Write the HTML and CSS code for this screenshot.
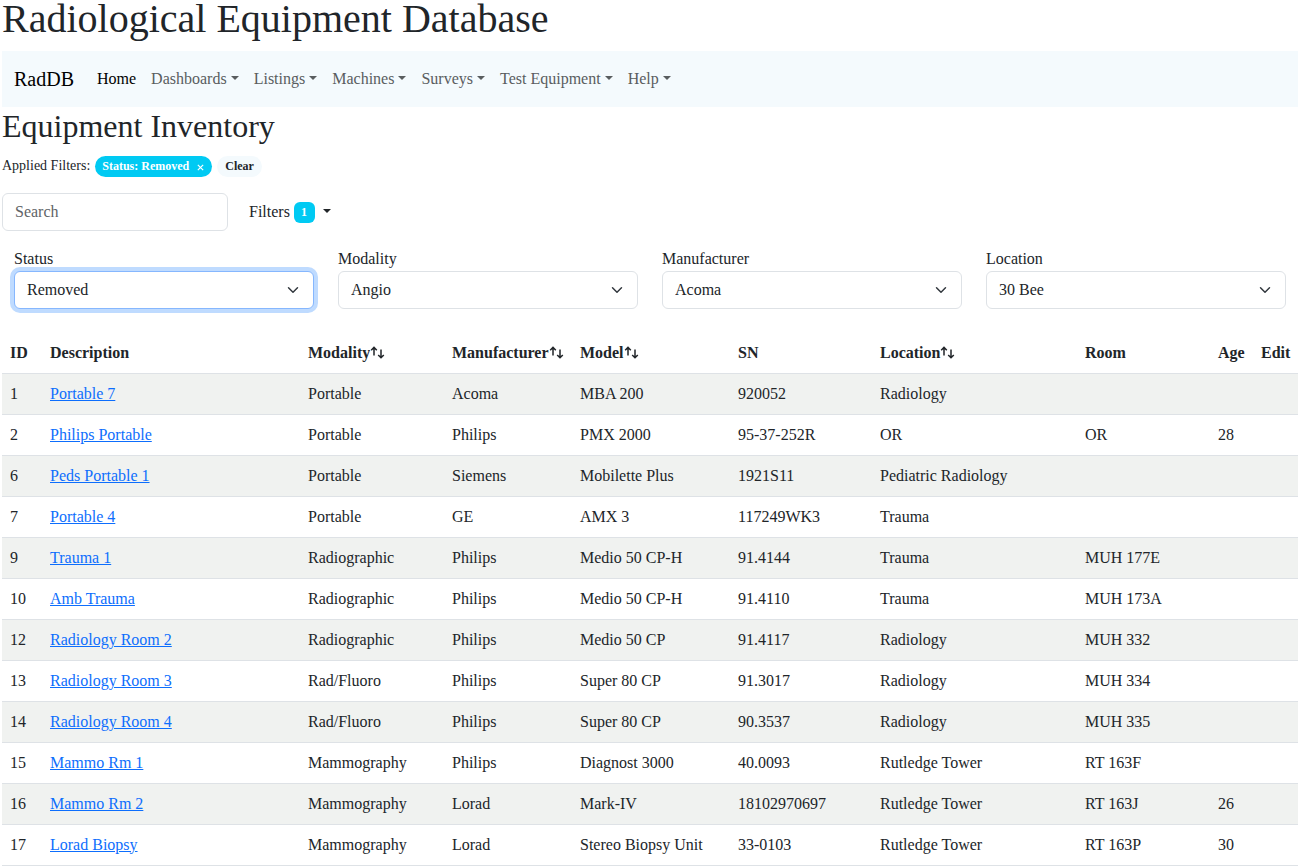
FILE: index.html
```
<!DOCTYPE html>
<html lang="en">
<head>
<meta charset="utf-8">
<title>Radiological Equipment Database</title>
<link rel="stylesheet" href="styles.css">
</head>
<body>
<svg class="sprite" aria-hidden="true">
  <symbol id="sort" viewBox="0 0 15 14"><path d="M4 9.5V1.6M1.2 4.2 4 1.4l2.8 2.8M11 3.5v8.2M8.2 9 11 11.8 13.8 9"/></symbol>
</svg>
<h1 class="site-title">Radiological Equipment Database</h1>
<nav class="navbar">
  <a class="brand" href="#">RadDB</a>
  <a class="nav-link active" href="#">Home</a>
  <a class="nav-link caret" href="#">Dashboards</a>
  <a class="nav-link caret" href="#">Listings</a>
  <a class="nav-link caret" href="#">Machines</a>
  <a class="nav-link caret" href="#">Surveys</a>
  <a class="nav-link caret" href="#">Test Equipment</a>
  <a class="nav-link caret" href="#">Help</a>
</nav>
<main>
  <h2 class="page-title">Equipment Inventory</h2>
  <div class="applied">
    <span class="applied-label">Applied Filters:</span>
    <span class="pill pill-info">Status: Removed <button class="pill-close" type="button" aria-label="Remove status filter"><svg viewBox="0 0 6 6"><path d="M.7.7l4.6 4.6M5.3.7.7 5.3"/></svg></button></span>
    <button class="pill pill-light" type="button">Clear</button>
  </div>
  <div class="toolbar">
    <input class="search" type="text" placeholder="Search" aria-label="Search">
    <button class="filters-toggle caret" type="button">Filters <span class="count">1</span></button>
  </div>
  <div class="filters">
    <div class="field"><label for="status">Status</label><select id="status" class="select focused"><option>Removed</option></select></div>
    <div class="field"><label for="modality">Modality</label><select id="modality" class="select"><option>Angio</option></select></div>
    <div class="field"><label for="manufacturer">Manufacturer</label><select id="manufacturer" class="select"><option>Acoma</option></select></div>
    <div class="field"><label for="location">Location</label><select id="location" class="select"><option>30 Bee</option></select></div>
  </div>
  <table class="inventory">
    <colgroup><col class="c-id"><col class="c-desc"><col class="c-modality"><col class="c-maker"><col class="c-model"><col class="c-sn"><col class="c-location"><col class="c-room"><col class="c-age"><col class="c-edit"></colgroup>
    <thead>
      <tr><th>ID</th><th>Description</th><th>Modality<svg class="sort"><use href="#sort"/></svg></th><th>Manufacturer<svg class="sort"><use href="#sort"/></svg></th><th>Model<svg class="sort"><use href="#sort"/></svg></th><th>SN</th><th>Location<svg class="sort"><use href="#sort"/></svg></th><th>Room</th><th>Age</th><th>Edit</th></tr>
    </thead>
    <tbody>
      <tr><td>1</td><td><a href="#">Portable 7</a></td><td>Portable</td><td>Acoma</td><td>MBA 200</td><td>920052</td><td>Radiology</td><td></td><td></td><td></td></tr>
      <tr><td>2</td><td><a href="#">Philips Portable</a></td><td>Portable</td><td>Philips</td><td>PMX 2000</td><td>95-37-252R</td><td>OR</td><td>OR</td><td>28</td><td></td></tr>
      <tr><td>6</td><td><a href="#">Peds Portable 1</a></td><td>Portable</td><td>Siemens</td><td>Mobilette Plus</td><td>1921S11</td><td>Pediatric Radiology</td><td></td><td></td><td></td></tr>
      <tr><td>7</td><td><a href="#">Portable 4</a></td><td>Portable</td><td>GE</td><td>AMX 3</td><td>117249WK3</td><td>Trauma</td><td></td><td></td><td></td></tr>
      <tr><td>9</td><td><a href="#">Trauma 1</a></td><td>Radiographic</td><td>Philips</td><td>Medio 50 CP-H</td><td>91.4144</td><td>Trauma</td><td>MUH 177E</td><td></td><td></td></tr>
      <tr><td>10</td><td><a href="#">Amb Trauma</a></td><td>Radiographic</td><td>Philips</td><td>Medio 50 CP-H</td><td>91.4110</td><td>Trauma</td><td>MUH 173A</td><td></td><td></td></tr>
      <tr><td>12</td><td><a href="#">Radiology Room 2</a></td><td>Radiographic</td><td>Philips</td><td>Medio 50 CP</td><td>91.4117</td><td>Radiology</td><td>MUH 332</td><td></td><td></td></tr>
      <tr><td>13</td><td><a href="#">Radiology Room 3</a></td><td>Rad/Fluoro</td><td>Philips</td><td>Super 80 CP</td><td>91.3017</td><td>Radiology</td><td>MUH 334</td><td></td><td></td></tr>
      <tr><td>14</td><td><a href="#">Radiology Room 4</a></td><td>Rad/Fluoro</td><td>Philips</td><td>Super 80 CP</td><td>90.3537</td><td>Radiology</td><td>MUH 335</td><td></td><td></td></tr>
      <tr><td>15</td><td><a href="#">Mammo Rm 1</a></td><td>Mammography</td><td>Philips</td><td>Diagnost 3000</td><td>40.0093</td><td>Rutledge Tower</td><td>RT 163F</td><td></td><td></td></tr>
      <tr><td>16</td><td><a href="#">Mammo Rm 2</a></td><td>Mammography</td><td>Lorad</td><td>Mark-IV</td><td>18102970697</td><td>Rutledge Tower</td><td>RT 163J</td><td>26</td><td></td></tr>
      <tr><td>17</td><td><a href="#">Lorad Biopsy</a></td><td>Mammography</td><td>Lorad</td><td>Stereo Biopsy Unit</td><td>33-0103</td><td>Rutledge Tower</td><td>RT 163P</td><td>30</td><td></td></tr>
    </tbody>
  </table>
</main>
</body>
</html>
```

FILE: styles.css
```
*, *::before, *::after { box-sizing: border-box; }
body {
  margin: 0;
  padding: 0 13px 0 2px;
  font: 16px/24px "Liberation Serif", "Times New Roman", serif;
  color: #212529;
  background: #fff;
}
button, input, select { font: inherit; color: inherit; }
.sprite { display: none; }

.site-title { margin: 0 0 13px; font-size: 40px; line-height: 38px; font-weight: 400; }
.navbar { display: flex; align-items: center; padding: 8px 12px; background: #f4fafd; }
.brand { margin-right: 15px; padding: 5px 0; font-size: 20px; line-height: 30px; color: #000; text-decoration: none; }
.nav-link { padding: 8px 7px 8px 8px; color: #595d5f; text-decoration: none; }
.nav-link.active { color: #000; }
.caret::after {
  content: "";
  display: inline-block;
  margin-left: 4px;
  vertical-align: 4px;
  border: 4px solid transparent;
  border-top-color: currentColor;
  border-bottom: 0;
}

.page-title { margin: 0 0 8px; font-size: 32px; line-height: 38px; font-weight: 400; }
.applied { display: flex; align-items: center; gap: 5px; height: 24px; margin-bottom: 16px; }
.applied-label { padding-top: 2px; font-size: 14px; }
.pill {
  display: inline-flex;
  align-items: center;
  margin-top: 2px;
  padding: 4px 8px 5px 7px;
  border: 0;
  border-radius: 11px;
  font-size: 12px;
  line-height: 12px;
  font-weight: 700;
}
.pill-info { color: #fff; background: #00caf3; }
.pill-light { padding-left: 8px; background: #f4fafd; }
.pill-close { display: flex; margin: 3px 0 0 8px; padding: 0; border: 0; color: #fff; background: none; }
.pill-close svg { width: 7px; height: 7px; fill: none; stroke: currentColor; stroke-width: 1; }

.toolbar { display: flex; align-items: center; gap: 9px; margin-bottom: 16px; }
.search, .select { height: 38px; border: 1px solid #dee2e6; border-radius: 6px; background-color: #fff; }
.search { width: 226px; padding: 6px 12px; }
.search::placeholder { color: #5f6468; opacity: 1; }
.filters-toggle { padding: 6px 12px; border: 0; background: none; }
.filters-toggle::after { margin-left: 8px; }
.count {
  display: inline-block;
  padding: 4px 8px 5px 7px;
  border-radius: 6px;
  font-size: 12px;
  line-height: 12px;
  font-weight: 700;
  vertical-align: 1px;
  color: #fff;
  background: #00caf3;
}

.filters { display: grid; grid-template-columns: repeat(4, 1fr); gap: 24px; padding: 0 12px; margin-bottom: 23px; }
.field { display: flex; flex-direction: column; }
.select {
  width: 100%;
  padding: 6px 36px 6px 12px;
  appearance: none;
  background: #fff url("data:image/svg+xml,%3Csvg xmlns='http://www.w3.org/2000/svg' viewBox='0 0 16 16'%3E%3Cpath fill='none' stroke='%23343a40' stroke-linecap='round' stroke-linejoin='round' stroke-width='2' d='m2 5 6 6 6-6'/%3E%3C/svg%3E") no-repeat right 12px center / 16px 12px;
}
.select.focused { border-color: #86b7fe; box-shadow: 0 0 0 4px #bfdbff; outline: 0; }

.inventory { width: 100%; table-layout: fixed; border-collapse: collapse; }
.inventory th, .inventory td { height: 41px; padding: 8px; border-bottom: 1px solid #dee2e6; text-align: left; white-space: nowrap; }
.inventory th { padding: 9px 8px 7px; }
.inventory tbody tr:nth-child(odd) { background: #f0f2f0; }
.inventory a { color: #0d6efd; }
.sort { width: 15px; height: 14px; vertical-align: -2px; fill: none; stroke: currentColor; stroke-width: 1.5; }
.c-id { width: 40px; }
.c-desc { width: 258px; }
.c-modality { width: 144px; }
.c-maker { width: 128px; }
.c-model { width: 158px; }
.c-sn { width: 142px; }
.c-location { width: 205px; }
.c-room { width: 133px; }
.c-age { width: 43px; }
.c-edit { width: 45px; }
```
